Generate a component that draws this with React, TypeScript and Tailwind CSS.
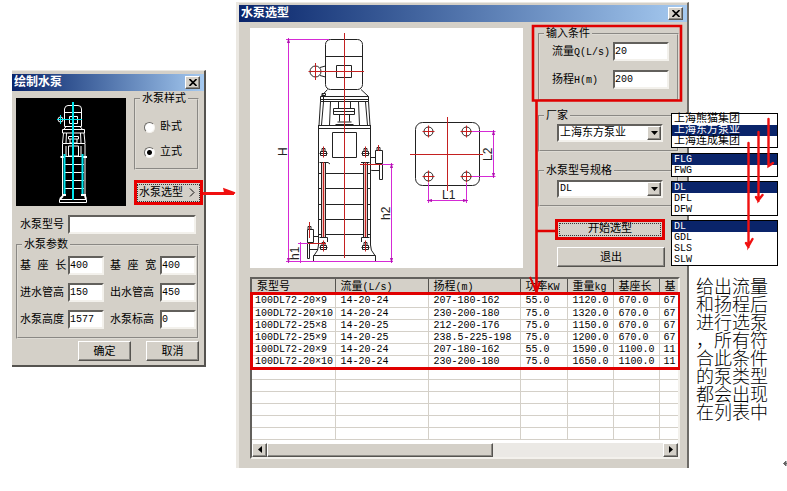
import React, { useState } from 'react';

const FONT = "font-['Liberation_Mono','Noto_Sans_CJK_SC',monospace]";
const RAISED =
  'bg-[#d4d0c8] border border-t-white border-l-white border-r-[#55534f] border-b-[#55534f] shadow-[inset_-1px_-1px_0_#8c8a85]';
const SUNKEN =
  'bg-white border-2 border-t-[#62605c] border-l-[#62605c] border-r-[#f3f1ec] border-b-[#f3f1ec]';

const headers: [string, string][] = [
  ['泵型号', ''],
  ['流量', '(L/s)'],
  ['扬程', '(m)'],
  ['功率', 'KW'],
  ['重量', 'kg'],
  ['基座长', ''],
  ['基', '']
];

const pumps = [
  ['100DL72-20×9', '14-20-24', '207-180-162', '55.0', '1120.0', '670.0', '67'],
  ['100DL72-20×10', '14-20-24', '230-200-180', '75.0', '1320.0', '670.0', '67'],
  ['100DL72-25×8', '14-20-25', '212-200-176', '75.0', '1150.0', '670.0', '67'],
  ['100DL72-25×9', '14-20-25', '238.5-225-198', '75.0', '1200.0', '670.0', '67'],
  ['100DL72-20×9', '14-20-24', '207-180-162', '55.0', '1590.0', '1100.0', '11'],
  ['100DL72-20×10', '14-20-24', '230-200-180', '75.0', '1650.0', '1100.0', '11']
];

const optionLists = [
  { label: '厂家', items: ['上海熊猫集团', '上海东方泵业', '上海连成集团'], selected: 1 },
  { label: '熊猫型号', items: ['FLG', 'FWG'], selected: 0 },
  { label: '东方型号', items: ['DL', 'DFL', 'DFW'], selected: 0 },
  { label: '连成型号', items: ['DL', 'GDL', 'SLS', 'SLW'], selected: 0 }
];

const TitleBar: React.FC<{ title: string }> = ({ title }) => (
  <header className="flex h-[17px] items-center justify-between bg-linear-to-r from-[#0a246a] to-[#a6caf0] pl-0.5 pr-1">
    <h1 className="pt-px text-[12px] leading-[16px] font-bold text-white">{title}</h1>
    <button type="button" aria-label="关闭" className={`flex h-[13px] w-[15px] items-center justify-center ${RAISED}`}>
      <svg width="8" height="7" viewBox="0 0 8 7" stroke="#000" strokeWidth="1.6">
        <path d="M0.5 0L7.5 7M7.5 0L0.5 7" />
      </svg>
    </button>
  </header>
);

interface GroupProps {
  legend: string;
  className?: string;
  children: React.ReactNode;
}

const Group: React.FC<GroupProps> = ({ legend, className = '', children }) => (
  <fieldset className={`min-w-0 border-2 border-[#dedbd4] [border-style:groove] ${className}`}>
    <legend className="ml-1 px-0.5 pt-px text-[11px] leading-[16px]">{legend}</legend>
    {children}
  </fieldset>
);

interface FieldProps {
  id: string;
  label: React.ReactNode;
  value: string;
  labelClass: string;
  inputClass: string;
}

const Field: React.FC<FieldProps> = ({ id, label, value, labelClass, inputClass }) => {
  const [text, setText] = useState(value);
  return (
    <div className="flex h-[19px] items-center">
      <label htmlFor={id} className={`shrink-0 pt-px text-[11px] leading-[16px] whitespace-nowrap ${labelClass}`}>
        {label}
      </label>
      <input
        id={id}
        value={text}
        onChange={e => setText(e.target.value)}
        className={`h-[19px] min-w-0 pb-px text-[10px] leading-[14px] outline-none ${SUNKEN} ${inputClass}`}
      />
    </div>
  );
};

const Combo: React.FC<{ label: string; options: string[]; value: string; className: string }> = ({
  label,
  options,
  value,
  className
}) => (
  <div className={`relative ml-[17px] h-[18px] w-[106px] ${SUNKEN}`}>
    <select
      aria-label={label}
      defaultValue={value}
      className={`block h-[14px] w-full appearance-none pl-px leading-[14px] outline-none ${className}`}
    >
      {options.map(o => (
        <option key={o}>{o}</option>
      ))}
    </select>
    <span className={`pointer-events-none absolute top-0 right-0 flex h-[14px] w-[14px] items-center justify-center ${RAISED}`}>
      <svg width="7" height="4" viewBox="0 0 7 4">
        <path d="M0 0H7L3.5 4Z" />
      </svg>
    </span>
  </div>
);

// Маленький эскиз насоса на чёрном фоне
const PumpPreview: React.FC = () => (
  <svg width="110" height="108" viewBox="0 0 110 108" fill="none" stroke="#fff" className="shrink-0 bg-black">
    <path d="M48.5 28.5V11Q49 7.5 52 7.5H62Q65.5 7.5 65.5 11V28.5ZM48.5 14.5H65.5M53.5 18.5H61.5V25.5H53.5ZM50 28.5L47.5 32M64 28.5L67 32" />
    <path d="M46.5 31.5H68.5V35H46.5ZM47.5 35L46.5 45M50.5 35L50 45M68 35L69 45M64.5 35L65 45M52.5 38.5H62.5V41H52.5ZM54 41V45H61V41" />
    <path d="M46.5 45.5H69V98M46.5 45.5V98M52.5 58V48H62.5V58ZM50 48V58M65 48V58" />
    <path d="M48 58.5H68M48 66.5H68M48 74.5H68M48 82.5H68M48 90.5H68" />
    <path d="M44.5 59H49M66 59H71M46 97H50M65 97H70M47 98L44 101M69 98L70 101" strokeWidth="2" />
    <path d="M43.5 101.5H70.5V104.5H43.5Z" />
    <circle cx="44.5" cy="21.5" r="2.5" />
    <g stroke="#00e5ee">
      <path d="M57 4V102" strokeWidth="2" />
      <path d="M48.5 56V96M66.5 56V96" strokeWidth="2" />
      <path d="M41 21.5H66M44.5 17V26" />
    </g>
  </svg>
);

const Hole: React.FC<{ cx: number; cy: number }> = ({ cx, cy }) => (
  <g>
    <circle cx={cx} cy={cy} r="4.5" />
    <path d={`M${cx - 6} ${cy}h12M${cx} ${cy - 6}v12`} stroke="#c42020" />
  </g>
);

const Nut: React.FC<{ cx: number; cy: number }> = ({ cx, cy }) => (
  <g>
    <path d={`M${cx - 3} ${cy - 1}h6v4h-6zM${cx - 1.5} ${cy - 4}h3v3h-3zM${cx - 4} ${cy + 1}h8`} />
    <path d={`M${cx} ${cy - 6}v11`} stroke="#c42020" />
  </g>
);

const PumpDrawing: React.FC = () => (
  <svg width="273" height="240" viewBox="0 0 273 240" fill="none" stroke="#222">
    <rect x="75.5" y="11.5" width="37" height="50" rx="5" />
    <path d="M75.5 28.5H112.5M86.5 37.5H101.5V49.5H86.5ZM70 39.5L75.5 38M70 47.5L75.5 49" />
    <circle cx="65.5" cy="43.5" r="5.5" />
    <path d="M77.5 61.5L71 68.5M111 61.5L118.5 68.5M70.5 68.5H118.5V73.5H70.5ZM70.5 71.5H118.5" />
    <path d="M72 65.5H75.5V67.5H72ZM73.5 68V74" />
    <path d="M70.5 73.5L69 97.5M73.5 74L71.5 97M118.5 73.5L120 97.5M115.5 74L117.5 97M80.5 74L79.5 97M108.5 74L109.5 97" />
    <path d="M88.5 74V80.5M100.5 74V80.5M83.5 80.5H104.5V86.5H83.5ZM83.5 83.5H104.5M89.5 87V93.5M99.5 87V93.5M87.5 94H101.5M85.5 96.5H103.5" />
    <path d="M69 97.5H120M68.5 100.5H120.5M68.5 97V217M120.5 97V217" />
    <path d="M82.5 104.5H106.5V129.5H82.5Z" />
    <path d="M68.5 145.5H120.5M68.5 160.5H120.5M68.5 176.5H120.5M68.5 191.5H120.5M68.5 206.5H120.5" />
    <path d="M71.5 134.5H75.5V209.5H71.5ZM113.500 134.5H117.5V209.5H113.5Z" fill="#f0c4be" />
    <path d="M69.5 134.5H78L80 136M111 134.5H119.5M69.5 209.5H77.5V214M111.5 214V209.5H119.5" />
    <path d="M68.5 217Q69 222 64 227.5M120.5 217Q120 222 125 227.5M63.5 227.5H125.5V233.5H63.5Z" />
    <path d="M57.5 201.5H63.5V214.5H57.5ZM57.5 214.5V230.5H59.5V214.5M63.5 208.5H68.5M60 221.5H68M58 201V198.5H61V201" />
    <path d="M125.5 122.5H132.5V135.5H125.5ZM129.5 135.5V151.5H132.5V135.5M120.5 129.5H125.5M120.5 145V142Q121 142.5 123 142.5H129M127 122V119.5H130V122" />
    <Nut cx={73.5} cy={124.5} />
    <Nut cx={115.5} cy={124.5} />
    <Nut cx={73.5} cy={218.5} />
    <Nut cx={115.5} cy={218.5} />
    <rect x="165.5" y="94.5" width="64" height="63" rx="7" />
    <g stroke="#c42020">
      <path d="M94.5 5V230M58.5 43.5H114M65.5 35V52M59.5 194V210M58 215.5H76M110 136.5H132M128.5 117V123" />
      <path d="M73.5 134V209M115.5 134V209M197.5 89V163M160 126.5H233" />
    </g>
    <Hole cx={178.5} cy={103.5} />
    <Hole cx={216.5} cy={103.5} />
    <Hole cx={178.5} cy={148.5} />
    <Hole cx={216.5} cy={148.5} />
    <g stroke="#d52ad5">
      <path d="M38.5 10V235M36 11.5H79M36 233.5H143M50.5 214V235M48 215.5H58M141.5 135V235M132 136.5H143.5" />
      <path d="M222 103.5H245.5M222 148.5H245.5M243.5 102V150M178.5 155V175M216.5 155V175M177 172.5H218" />
    </g>
    <g fill="#b010b0" stroke="none">
      <path d="M37 15L38.5 10L40 15ZM37 230L38.5 235L40 230ZM140 140L141.5 135L143 140ZM140 230L141.5 235L143 230ZM242 107L243.5 102L245 107ZM242 145L243.5 150L245 145Z" />
      <path d="M182 171L177 172.5L182 174ZM213 171L218 172.5L213 174Z" />
    </g>
    <g fill="#222" stroke="none" fontFamily="Liberation Sans, sans-serif" fontSize="12">
      <text x="192" y="171">L1</text>
      <text transform="translate(242 133) rotate(-90)">L2</text>
      <text transform="translate(37 128) rotate(-90)">H</text>
      <text transform="translate(140 192) rotate(-90)">h2</text>
      <text transform="translate(49 232) rotate(-90)">h1</text>
    </g>
  </svg>
);

const PumpDialog: React.FC = () => {
  const [style, setStyle] = useState('立式');
  return (
    <section className="relative mt-[70px] w-[194px] shrink-0 border-t border-r-2 border-b-2 border-t-[#ebe8e2] border-r-[#55534f] border-b-[#55534f] bg-[#d4d0c8] pt-[3px] pb-1">
      <TitleBar title="绘制水泵" />
      <form className="pl-1 pr-[5px]" onSubmit={e => e.preventDefault()}>
        <div className="mt-[7px] flex justify-between">
          <PumpPreview />
          <div className="-mt-2 flex w-[65px] flex-col">
            <Group legend="水泵样式" className="h-[80px]">
              <div className="mt-3 ml-[8px] flex flex-col gap-[9px]">
                {['卧式', '立式'].map(s => (
                  <label key={s} className="flex items-center gap-[5px] text-[11px] leading-[16px]">
                    <input
                      type="radio"
                      name="pump-style"
                      checked={style === s}
                      onChange={() => setStyle(s)}
                      className="h-[11px] w-[11px] appearance-none rounded-full border border-t-[#6d6b67] border-r-[#f5f3ef] border-b-[#f5f3ef] border-l-[#6d6b67] bg-white checked:bg-[radial-gradient(#000_2px,#fff_3px)]"
                    />
                    {s}
                  </label>
                ))}
              </div>
            </Group>
            <button
              type="button"
              className="mt-[10px] -mr-1 h-[25px] border-3 border-[#e80000] bg-[#d4d0c8] text-[11px] leading-[16px] whitespace-nowrap"
            >
              <span className="flex h-[18px] items-center justify-between border border-dotted border-[#333] pr-1 pl-px">
                水泵选型
                <svg width="6" height="9" viewBox="0 0 6 9" fill="none" stroke="#111">
                  <path d="M1 0.5L5 4.5L1 8.5" />
                </svg>
              </span>
            </button>
          </div>
        </div>
        <div className="mt-[9px] pl-1">
          <Field id="model" label="水泵型号" value="" labelClass="w-[48px]" inputClass="mr-[3px] flex-1" />
        </div>
        <Group legend="水泵参数" className="mt-[2px] h-[103px]">
          <div className="mt-[3px] grid grid-cols-[1fr_86px] gap-y-2 pl-0.5 pr-px">
            <Field id="base-l" label="基 座 长" value="400" labelClass="w-[48px]" inputClass="w-[36px]" />
            <Field id="base-w" label="基 座 宽" value="400" labelClass="w-[50px]" inputClass="w-[36px]" />
            <Field id="in-h" label="进水管高" value="150" labelClass="w-[48px]" inputClass="w-[36px]" />
            <Field id="out-h" label="出水管高" value="450" labelClass="w-[50px]" inputClass="w-[36px]" />
            <Field id="pump-h" label="水泵高度" value="1577" labelClass="w-[48px]" inputClass="w-[36px]" />
            <Field id="level" label="水泵标高" value="0" labelClass="w-[50px]" inputClass="w-[36px]" />
          </div>
        </Group>
        <div className="mt-[2px] flex justify-end gap-[15px]">
          <button type="submit" className={`h-5 w-[53px] pt-px text-[11px] leading-[16px] ${RAISED}`}>
            确定
          </button>
          <button type="button" className={`h-5 w-[53px] pt-px text-[11px] leading-[16px] ${RAISED}`}>
            取消
          </button>
        </div>
      </form>
      <svg width="38" height="14" viewBox="0 0 38 14" className="absolute top-[114px] left-[188px]" fill="none" stroke="#f01010">
        <path d="M3 8.500H34" strokeWidth="3" />
        <path d="M24 4L35 8L25 9Z" fill="#f01010" strokeWidth="1.5" />
      </svg>
    </section>
  );
};

const PumpTable: React.FC = () => (
  <div className={`relative mt-[9px] -mr-px ${SUNKEN}`}>
    <table className="w-full table-fixed border-collapse text-left">
      <colgroup>
        <col className="w-[83px]" />
        <col className="w-[93px]" />
        <col className="w-[92px]" />
        <col className="w-[47px]" />
        <col className="w-[46px]" />
        <col className="w-[46px]" />
        <col />
      </colgroup>
      <thead>
        <tr className="h-[15px] bg-[#d4d0c8]">
          {headers.map(([cjk, unit], i) => (
            <th
              key={i}
              className="border-r border-[#55534f] p-0 pt-px pl-[5px] text-[11px] leading-[14px] font-normal whitespace-nowrap last:border-r-0"
            >
              {cjk}
              <span className="text-[10px]">{unit}</span>
            </th>
          ))}
        </tr>
      </thead>
      <tbody>
        {Array.from({ length: 12 }, (_, r) => (
          <tr key={r} className="h-[12px]">
            {headers.map((_h, c) => (
              <td
                key={c}
                className="h-[12px] border-r border-b border-[#d4d0c8] p-0 pl-[5px] text-[10px] leading-[11px] whitespace-nowrap first:pl-[3px] last:border-r-0 last:pl-1"
              >
                {pumps[r]?.[c]}
              </td>
            ))}
          </tr>
        ))}
      </tbody>
    </table>
    <div className="mt-[3px] flex h-[14px] bg-[#ebe9e5]">
      <button type="button" aria-label="向左" className={`flex w-[15px] items-center justify-center ${RAISED}`}>
        <svg width="4" height="7" viewBox="0 0 4 7">
          <path d="M4 0V7L0 3.5Z" />
        </svg>
      </button>
      <div className={`w-[53%] ${RAISED}`} />
      <button type="button" aria-label="向右" className={`ml-auto flex w-[15px] items-center justify-center ${RAISED}`}>
        <svg width="4" height="7" viewBox="0 0 4 7">
          <path d="M0 0V7L4 3.5Z" />
        </svg>
      </button>
    </div>
    <div className="pointer-events-none absolute inset-x-[-2px] top-[13px] h-[78px] border-[3px] border-r-2 border-[#e00000]" />
  </div>
);

const SelectionWindow: React.FC = () => (
  <section className="relative mt-[2px] ml-[30px] min-w-0 flex-1 border-t border-r-2 border-l-3 border-t-[#ebe8e2] border-r-[#6d6b67] border-l-[#ebe8e2] bg-[#d4d0c8] pt-0.5 pb-[9px]">
    <TitleBar title="水泵选型" />
    <div className="pt-[3px] pr-2 pl-[11px]">
      <div className="flex gap-[15px]">
        <div className="mt-[3px] h-[240px] min-w-0 flex-1 overflow-hidden bg-white">
          <PumpDrawing />
        </div>
        <div className="flex w-[141px] shrink-0 flex-col">
          <Group legend="输入条件" className="h-[76px]">
            <div className="flex flex-col gap-[9px] pl-3">
              <Field
                id="flow"
                label={<>流量<span className="text-[10px]">Q(L/s)</span></>}
                value="20"
                labelClass="w-[61px]"
                inputClass="w-[56px]"
              />
              <Field
                id="lift"
                label={<>扬程<span className="text-[10px]">H(m)</span></>}
                value="200"
                labelClass="w-[61px]"
                inputClass="w-[56px]"
              />
            </div>
          </Group>
          <Group legend="厂家" className="mt-[6px] h-[45px]">
            <Combo label="厂家" options={optionLists[0].items} value="上海东方泵业" className="text-[11px]" />
          </Group>
          <Group legend="水泵型号规格" className="mt-[10px] h-[45px] pt-px">
            <Combo label="水泵型号规格" options={optionLists[2].items} value="DL" className="text-[10px]" />
          </Group>
          <button
            type="button"
            className="mt-[12px] ml-[17px] h-[21px] w-[110px] border-3 border-[#e00000] p-px text-[11px] leading-[11px]"
          >
            <span className="flex h-[13px] items-center justify-center border border-dotted border-[#333]">开始选型</span>
          </button>
          <button type="button" className={`mt-[7px] ml-[19px] h-5 w-[108px] pt-px text-[11px] leading-[16px] ${RAISED}`}>
            退出
          </button>
        </div>
      </div>
      <PumpTable />
    </div>
    <svg
      width="160"
      height="296"
      viewBox="0 0 160 296"
      className="pointer-events-none absolute -top-px -right-[2px]"
      fill="none"
      stroke="#e00000"
    >
      <path d="M4 24H152V98.5H4ZM7.5 98V291M7.5 229H27" strokeWidth="2.6" />
      <path d="M1 275L7.5 290L11 280" strokeWidth="2" />
    </svg>
  </section>
);

const SideColumn: React.FC = () => (
  <aside className="relative w-[98px] shrink-0 pt-[113px]">
    <div className="relative -ml-[18px] flex w-[107px] flex-col gap-1">
      {optionLists.map((list, i) => (
        <ul key={i} role="listbox" aria-label={list.label} className="border border-black bg-white first:mb-px">
          {list.items.map((item, j) => (
            <li
              key={item}
              role="option"
              aria-selected={j === list.selected}
              className={`h-[11px] pl-0.5 leading-[11px] ${i === 0 ? 'text-[11px]' : 'text-[10px]'} ${
                j === list.selected ? 'bg-[#0a246a] text-white' : ''
              }`}
            >
              {item}
            </li>
          ))}
        </ul>
      ))}
    </div>
    <p className="mt-[13px] ml-[7px] w-[73px] text-[18px] leading-[18px] font-light break-all [line-break:anywhere]">
      给出流量和扬程后进行选泵，所有符合此条件的泵类型都会出现在列表中
    </p>
    <svg
      width="40"
      height="136"
      viewBox="0 0 40 136"
      className="pointer-events-none absolute top-[116px] left-[54px]"
      fill="none"
      stroke="#f01010"
      strokeWidth="2.4"
      strokeLinecap="round"
    >
      <path d="M5.5 27V130L9.5 123M15.5 16V84L19.5 79M25.5 3V50L30 47M3 127L5.5 131M13 81L15.5 85" />
    </svg>
    <svg width="4" height="7" viewBox="0 0 4 7" className="absolute top-[460px] right-0" fill="#666" stroke="#666">
      <path d="M4 3.5H0.5M3 1L0.5 3.5L3 6Z" />
    </svg>
  </aside>
);

const App: React.FC = () => (
  <main className={`flex min-h-screen items-start bg-white pl-3 text-black ${FONT}`}>
    <PumpDialog />
    <SelectionWindow />
    <SideColumn />
  </main>
);

export default App;
